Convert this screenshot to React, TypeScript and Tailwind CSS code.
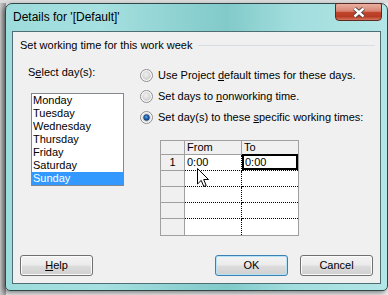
import React from 'react';

const days = ['Monday', 'Tuesday', 'Wednesday', 'Thursday', 'Friday', 'Saturday', 'Sunday'];

const Radio = ({ checked }: { checked?: boolean }) => (
  <svg width="13" height="13" viewBox="0 0 13 13" className="shrink-0">
    <defs>
      <radialGradient id="rbody" cx="45%" cy="40%" r="65%">
        <stop offset="0" stopColor="#f2f2f2" />
        <stop offset="1" stopColor="#c9c9c9" />
      </radialGradient>
      <radialGradient id="rdot" cx="45%" cy="40%" r="60%">
        <stop offset="0" stopColor="#5fa4e8" />
        <stop offset="0.6" stopColor="#1d5ea8" />
        <stop offset="1" stopColor="#0f3f7a" />
      </radialGradient>
    </defs>
    <circle cx="6.5" cy="6.5" r="6" fill="#fafafa" stroke="#8d8d8d" />
    <circle cx="6.5" cy="6.5" r="4.4" fill="url(#rbody)" />
    {checked && <circle cx="6.5" cy="6.5" r="2.9" fill="url(#rdot)" stroke="#123c6c" strokeWidth="0.6" />}
  </svg>
);

const Button = ({ children, primary }: { children: React.ReactNode; primary?: boolean }) => (
  <div
    className={
      'w-[73px] h-[21px] rounded-[3px] border flex items-center justify-center leading-none bg-[linear-gradient(180deg,#f3f3f3_0%,#ebebeb_48%,#dddddd_52%,#cfcfcf_100%)] ' +
      (primary
        ? 'border-[#3c7fb1] shadow-[inset_0_0_0_1px_#b4e3f7]'
        : 'border-[#707070] shadow-[inset_0_0_0_1px_#fbfbfb]')
    }
  >
    {children}
  </div>
);

const GridRow = ({ n, from, to, last }: { n?: string; from?: string; to?: string; last?: boolean }) => (
  <div className="flex h-[16px]">
    <div className={'w-[24px] bg-[#f0f0f0] border-r border-[#a0a0a0] flex items-center justify-center ' + (last ? '' : 'border-b')}>
      {n}
    </div>
    <div className={'w-[57px] bg-white border-r border-dotted border-black pl-[2px] flex items-center ' + (last ? '' : 'border-b')}>
      {from}
    </div>
    <div className={'flex-1 bg-white flex items-center ' + (last ? '' : 'border-b border-dotted border-black')}>
      {to !== undefined ? (
        <div className="w-full h-[16px] -mt-[1px] border-2 border-black flex items-center pl-[1px]">{to}</div>
      ) : null}
    </div>
  </div>
);

export default function App() {
  return (
    <div className="relative w-[388px] h-[295px] overflow-hidden bg-[#ececec] font-['Liberation_Sans',Arial,sans-serif] text-[11px] text-black">
      {/* app behind the dialog */}
      <div className="absolute left-0 top-0 w-[6px] h-[295px] bg-[linear-gradient(90deg,#c9c9c9,#9a9a9a)]" />
      <div className="absolute left-0 top-0 w-[388px] h-[3px] bg-[#dcdcdc]" />

      <div className="relative ml-[5px] mt-[3px] w-[383px] h-[288px] rounded-t-[7px] rounded-b-[5px] border border-[#30474a] bg-[linear-gradient(90deg,#9ddcdc_0%,#a6e0e0_25%,#8fd2d2_45%,#82caca_58%,#a2dddd_75%,#b3e6e6_100%)] shadow-[-2px_2px_5px_rgba(0,0,0,0.45)] flex flex-col">
        {/* title bar */}
        <div className="h-[27px] flex items-start justify-between pl-[7px] pr-[5px]">
          <span className="mt-[6px] text-[12px] leading-[15px]">Details for '[Default]'</span>
          <div className="-mt-px w-[47px] h-[18px] rounded-b-[4px] rounded-t-[2px] border border-[#5b2a22] bg-[linear-gradient(180deg,#e9b0a2_0%,#d98572_45%,#c2452d_52%,#b53c24_78%,#d6755a_100%)] flex items-center justify-center">
            <svg width="14" height="11" viewBox="0 0 14 11">
              <path d="M2.5 1.5 L11.5 9.5 M11.5 1.5 L2.5 9.5" stroke="#3f3f3f" strokeWidth="4.2" />
              <path d="M2.5 1.5 L11.5 9.5 M11.5 1.5 L2.5 9.5" stroke="#ffffff" strokeWidth="2.4" />
            </svg>
          </div>
        </div>

        {/* client area */}
        <div className="mx-[6px] mb-[6px] flex-1 border border-[#4d6e72] bg-[#f0f0f0] flex flex-col">
          <div className="pt-[7px] pl-[7px] pr-[5px] h-[20px] flex items-end">
            <div className="h-[13px] w-full flex items-center">
              <span className="leading-[13px]">Set working time for this work week</span>
              <div className="flex-1 ml-[6px] h-px bg-[#d5dfe5]" />
            </div>
          </div>

          <div className="flex">
            <div className="ml-[15px] mt-[14px] flex flex-col">
              <span className="leading-[13px] h-[13px]">
                S<span className="underline">e</span>lect day(s):
              </span>
              <div className="ml-[3px] mt-[14px] w-[93px] border border-[#828790] bg-white">
                {days.map((d) => (
                  <div
                    key={d}
                    className={'h-[13px] leading-[13px] pl-[1px] ' + (d === 'Sunday' ? 'bg-[#3399ff] text-white' : '')}
                  >
                    {d}
                  </div>
                ))}
              </div>
            </div>

            <div className="ml-[16px] mt-[17px] flex flex-col">
              <div className="flex flex-col gap-[8px]">
                <div className="h-[13px] flex items-center gap-[5px]">
                  <Radio />
                  <span>
                    Use Project <span className="underline">d</span>efault times for these days.
                  </span>
                </div>
                <div className="h-[13px] flex items-center gap-[5px]">
                  <Radio />
                  <span>
                    Set days to <span className="underline">n</span>onworking time.
                  </span>
                </div>
                <div className="h-[13px] flex items-center gap-[5px]">
                  <Radio checked />
                  <span>
                    Set day(s) to these <span className="underline">s</span>pecific working times:
                  </span>
                </div>
              </div>

              <div className="relative ml-[20px] mt-[16px] w-[139px] border border-[#a0a0a0] flex flex-col">
                <div className="flex h-[14px] bg-[#f0f0f0] border-b border-[#a0a0a0]">
                  <div className="w-[24px] border-r border-[#a0a0a0]" />
                  <div className="w-[57px] border-r border-[#a0a0a0] pl-[2px] flex items-center">From</div>
                  <div className="flex-1 pl-[2px] flex items-center">To</div>
                </div>
                <GridRow n="1" from="0:00" to="0:00" />
                <GridRow />
                <GridRow />
                <GridRow />
                <GridRow last />
                {/* mouse pointer */}
                <svg className="absolute left-[36px] top-[27px]" width="13" height="20" viewBox="0 0 13 20">
                  <path d="M0.5 0.5 L0.5 16 L4.2 12.4 L6.8 18.5 L9.2 17.5 L6.7 11.5 L11.5 11.5 Z" fill="#fff" stroke="#000" strokeWidth="1" strokeLinejoin="miter" />
                </svg>
              </div>
            </div>
          </div>

          <div className="mt-auto mb-[7px] px-[7px] flex items-center">
            <Button>
              <span className="underline">H</span>elp
            </Button>
            <div className="flex-1" />
            <Button primary>OK</Button>
            <div className="w-[12px]" />
            <Button>Cancel</Button>
          </div>
        </div>
      </div>
    </div>
  );
}
